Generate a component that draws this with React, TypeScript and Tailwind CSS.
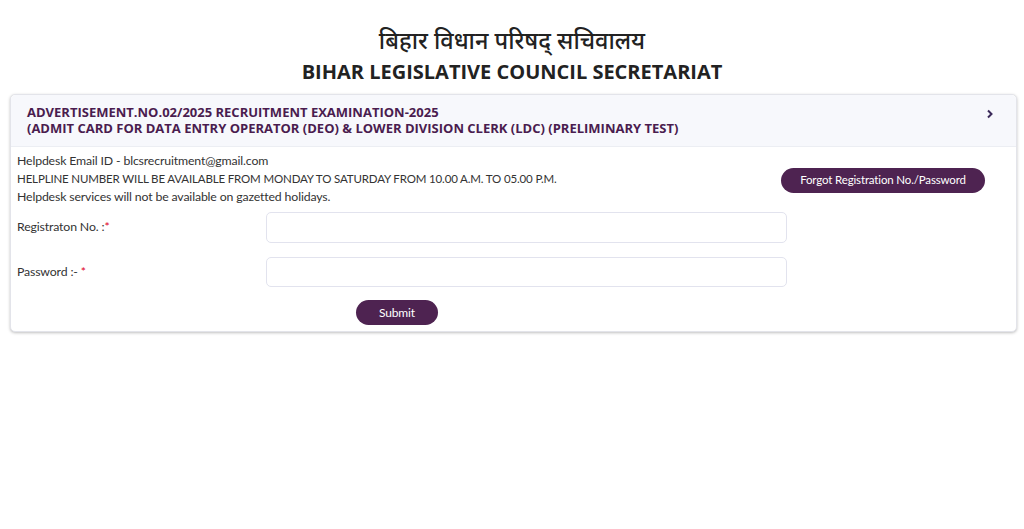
import React from 'react';

export default function App() {
  return (
    <div className="min-h-[529px] bg-white font-['Lato',sans-serif] text-[#212529]">
      {/* Title */}
      <div className="pt-[24px] text-center">
        <h1 className="text-[23.5px] leading-[32px] font-medium text-[#222] font-['Noto_Sans','Noto_Sans_Devanagari',sans-serif]">
          बिहार विधान परिषद् सचिवालय
        </h1>
        <h2 className="mt-[2px] text-[20px] leading-[28px] font-bold text-[#222] font-['Open_Sans',sans-serif]">
          BIHAR LEGISLATIVE COUNCIL SECRETARIAT
        </h2>
      </div>

      {/* Card */}
      <div className="mt-[8px] ml-[10px] mr-[7px] rounded-[5px] border border-[#e3e4ea] shadow-[0_1px_3px_rgba(0,0,0,0.25)] bg-white">
        <div className="flex items-start justify-between bg-[#f7f8fc] border-b border-[#eceef3] rounded-t-[5px] pl-[16px] pr-[22px] pt-[9px] pb-[10px] font-['Open_Sans',sans-serif]">
          <div className="text-[13px] leading-[16px] font-bold text-[#4a1c4f]">
            <div>ADVERTISEMENT.NO.02/2025 RECRUITMENT EXAMINATION-2025</div>
            <div>(ADMIT CARD FOR DATA ENTRY OPERATOR (DEO) &amp; LOWER DIVISION CLERK (LDC) (PRELIMINARY TEST)</div>
          </div>
          <svg width="8" height="10" viewBox="0 0 8 10" className="mt-[5px]">
            <path d="M2 1.5 L5.5 5 L2 8.5" fill="none" stroke="#3b2a5a" strokeWidth="2" />
          </svg>
        </div>

        <div className="px-[6px] pt-[5px] pb-[6px] text-[12.3px] tracking-[-0.15px]">
          <div className="flex items-center justify-between pr-[25px]">
            <div className="leading-[18px] text-[#333]">
              <div>Helpdesk Email ID - blcsrecruitment@gmail.com</div>
              <div className="text-[11.5px]">HELPLINE NUMBER WILL BE AVAILABLE FROM MONDAY TO SATURDAY FROM 10.00 A.M. TO 05.00 P.M.</div>
              <div>Helpdesk services will not be available on gazetted holidays.</div>
            </div>
            <button className="h-[25px] w-[204px] rounded-full bg-[#4e2351] text-white text-[11.5px] mt-[2px]">
              Forgot Registration No./Password
            </button>
          </div>

          <div className="mt-[6px] flex items-center">
            <label className="w-[249px] text-[#333]">
              Registraton No. :<span className="text-[#e0001b]">*</span>
            </label>
            <input className="h-[31px] w-[521px] rounded-[5px] border border-[#e2e3ee] outline-none" />
          </div>

          <div className="mt-[14px] flex items-center">
            <label className="w-[249px] text-[#333]">
              Password :- <span className="text-[#e0001b]">*</span>
            </label>
            <input type="password" className="h-[30px] w-[521px] rounded-[5px] border border-[#e2e3ee] outline-none" />
          </div>

          <div className="mt-[13px] pl-[339px]">
            <button className="h-[25px] w-[82px] rounded-full bg-[#4e2351] text-white text-[12px]">
              Submit
            </button>
          </div>
        </div>
      </div>
    </div>
  );
}
